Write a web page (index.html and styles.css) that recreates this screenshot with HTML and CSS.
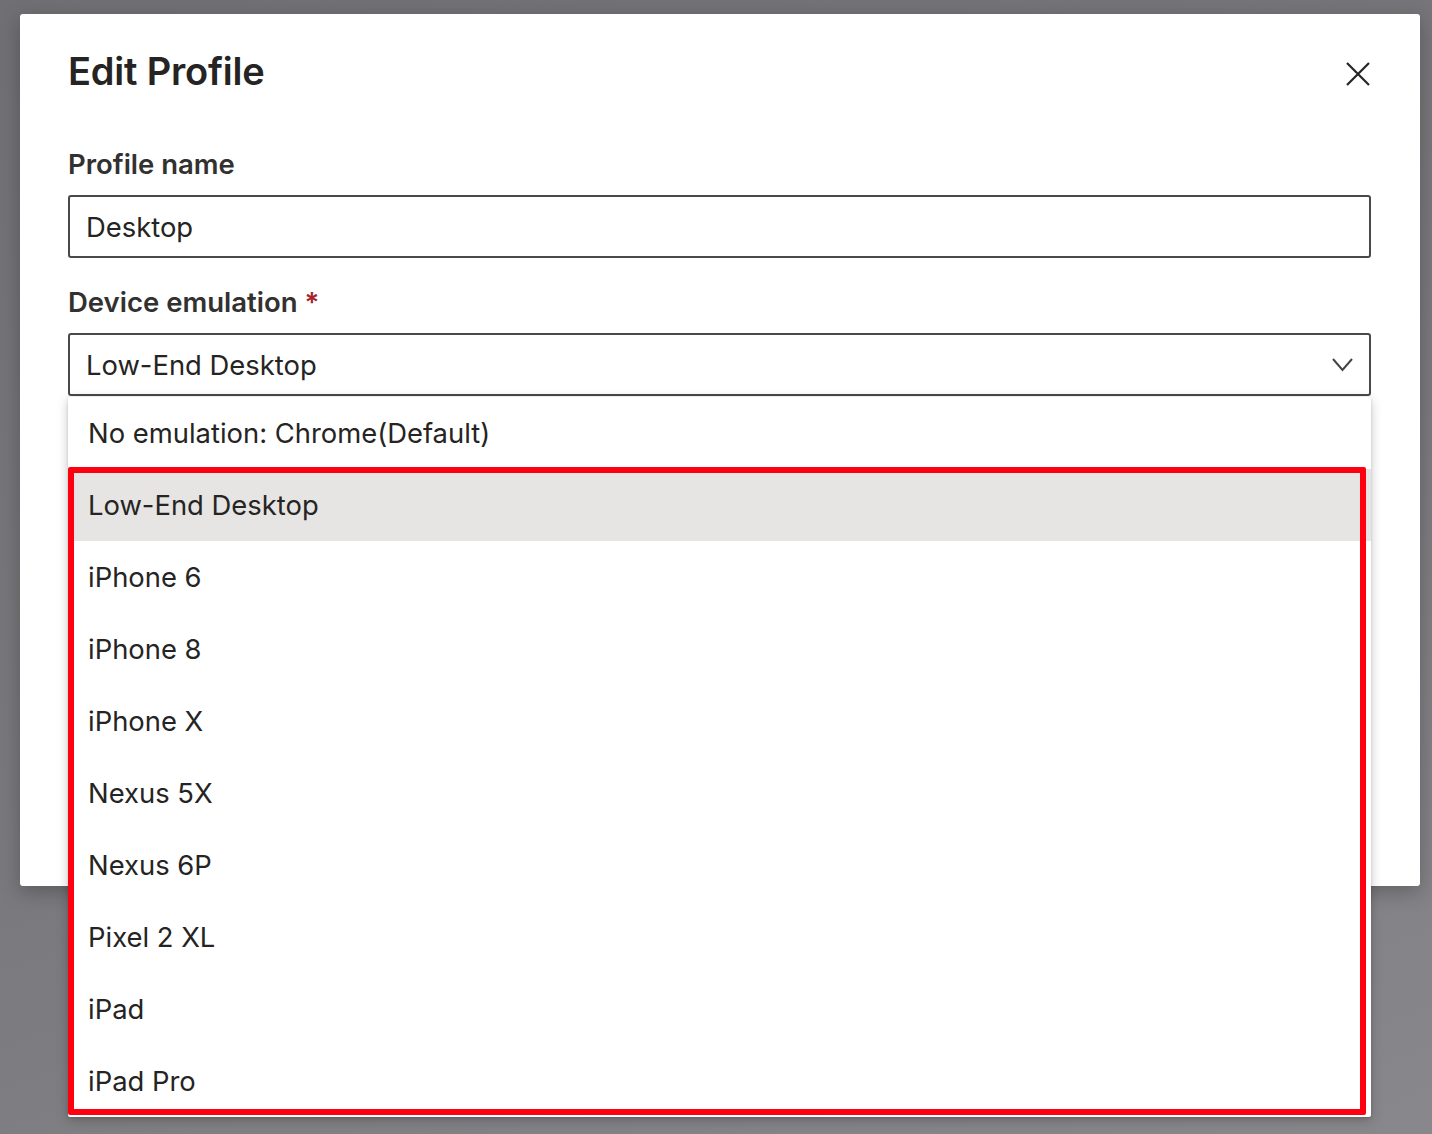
FILE: index.html
```html
<!DOCTYPE html>
<html lang="en">
<head>
<meta charset="utf-8">
<title>Edit Profile</title>
<link rel="stylesheet" href="styles.css">
</head>
<body>
<div class="backdrop">
  <div class="modal">
    <div class="modal-header">
      <h1 class="title">Edit Profile</h1>
      <button class="close" aria-label="Close">
        <svg width="25" height="25" viewBox="0 0 25 25"><path d="M1 1 L23 23 M23 1 L1 23" stroke="#252423" stroke-width="2.2" fill="none"/></svg>
      </button>
    </div>
    <label class="label">Profile name</label>
    <div class="input">Desktop</div>
    <label class="label label-second">Device emulation <span class="req">*</span></label>
    <div class="select-wrap">
      <div class="select">
        <span>Low-End Desktop</span>
        <svg class="chev" width="22" height="16" viewBox="0 0 22 16"><path d="M1 2 L10.5 13 L20 2" stroke="#444" stroke-width="2" fill="none"/></svg>
      </div>
      <div class="dropdown">
        <div class="option">No emulation: Chrome(Default)</div>
        <div class="option selected">Low-End Desktop</div>
        <div class="option">iPhone 6</div>
        <div class="option">iPhone 8</div>
        <div class="option">iPhone X</div>
        <div class="option">Nexus 5X</div>
        <div class="option">Nexus 6P</div>
        <div class="option">Pixel 2 XL</div>
        <div class="option">iPad</div>
        <div class="option">iPad Pro</div>
        <div class="highlight"></div>
      </div>
    </div>
  </div>
</div>
</body>
</html>
```

FILE: styles.css
```css
* { box-sizing: border-box; }
html, body { margin: 0; padding: 0; }
body {
  width: 1432px;
  height: 1134px;
  overflow: hidden;
  font-family: "Inter", "Noto Sans", sans-serif;
  color: #252423;
  background: linear-gradient(160deg, #707074 0%, #7a7a7e 55%, #88888c 100%);
}
.backdrop {
  padding: 14px 12px 0 20px;
}
.modal {
  width: 1400px;
  height: 872px;
  background: #fff;
  border-radius: 3px;
  box-shadow: 0 6px 20px rgba(0,0,0,0.25);
  padding: 34px 49px 0 48px;
}
.modal-header {
  display: flex;
  justify-content: space-between;
  align-items: flex-start;
  margin-bottom: 54px;
}
.title {
  margin: 0;
  font-size: 38px;
  line-height: 46px;
  font-weight: 600;
  color: #252423;
  letter-spacing: -0.2px;
}
.close {
  border: 0;
  background: none;
  padding: 0;
  margin-top: 14px;
  width: 25px;
  height: 25px;
}
.close svg { display: block; }
.label {
  display: block;
  font-size: 27.5px;
  line-height: 32px;
  font-weight: 600;
  color: #323130;
  margin-bottom: 15px;
}
.label-second { margin-top: 28px; }
.req { color: #a4262c; }
.input, .select {
  height: 63px;
  border: 2px solid #4a4948;
  border-radius: 3px;
  padding: 0 17px 0 16px;
  font-size: 27.4px;
  line-height: 60px;
  color: #252423;
}
.select-wrap { position: relative; }
.select {
  display: flex;
  justify-content: space-between;
  align-items: center;
  padding-right: 15px;
}
.chev { display: block; }
.dropdown {
  position: absolute;
  left: 0;
  right: 0;
  top: 64px;
  background: #fff;
  box-shadow: 0 3px 12px rgba(0,0,0,0.22), 0 1px 3px rgba(0,0,0,0.12);
  border-radius: 2px;
}
.option {
  height: 72px;
  line-height: 72px;
  padding-left: 20px;
  font-size: 27.4px;
  color: #252423;
}
.option.selected { background: #e6e5e3; }
.highlight {
  position: absolute;
  left: 0;
  top: 70px;
  width: 1298px;
  height: 648px;
  border: 6px solid #ff0010;
  border-radius: 2px;
  pointer-events: none;
}
```
